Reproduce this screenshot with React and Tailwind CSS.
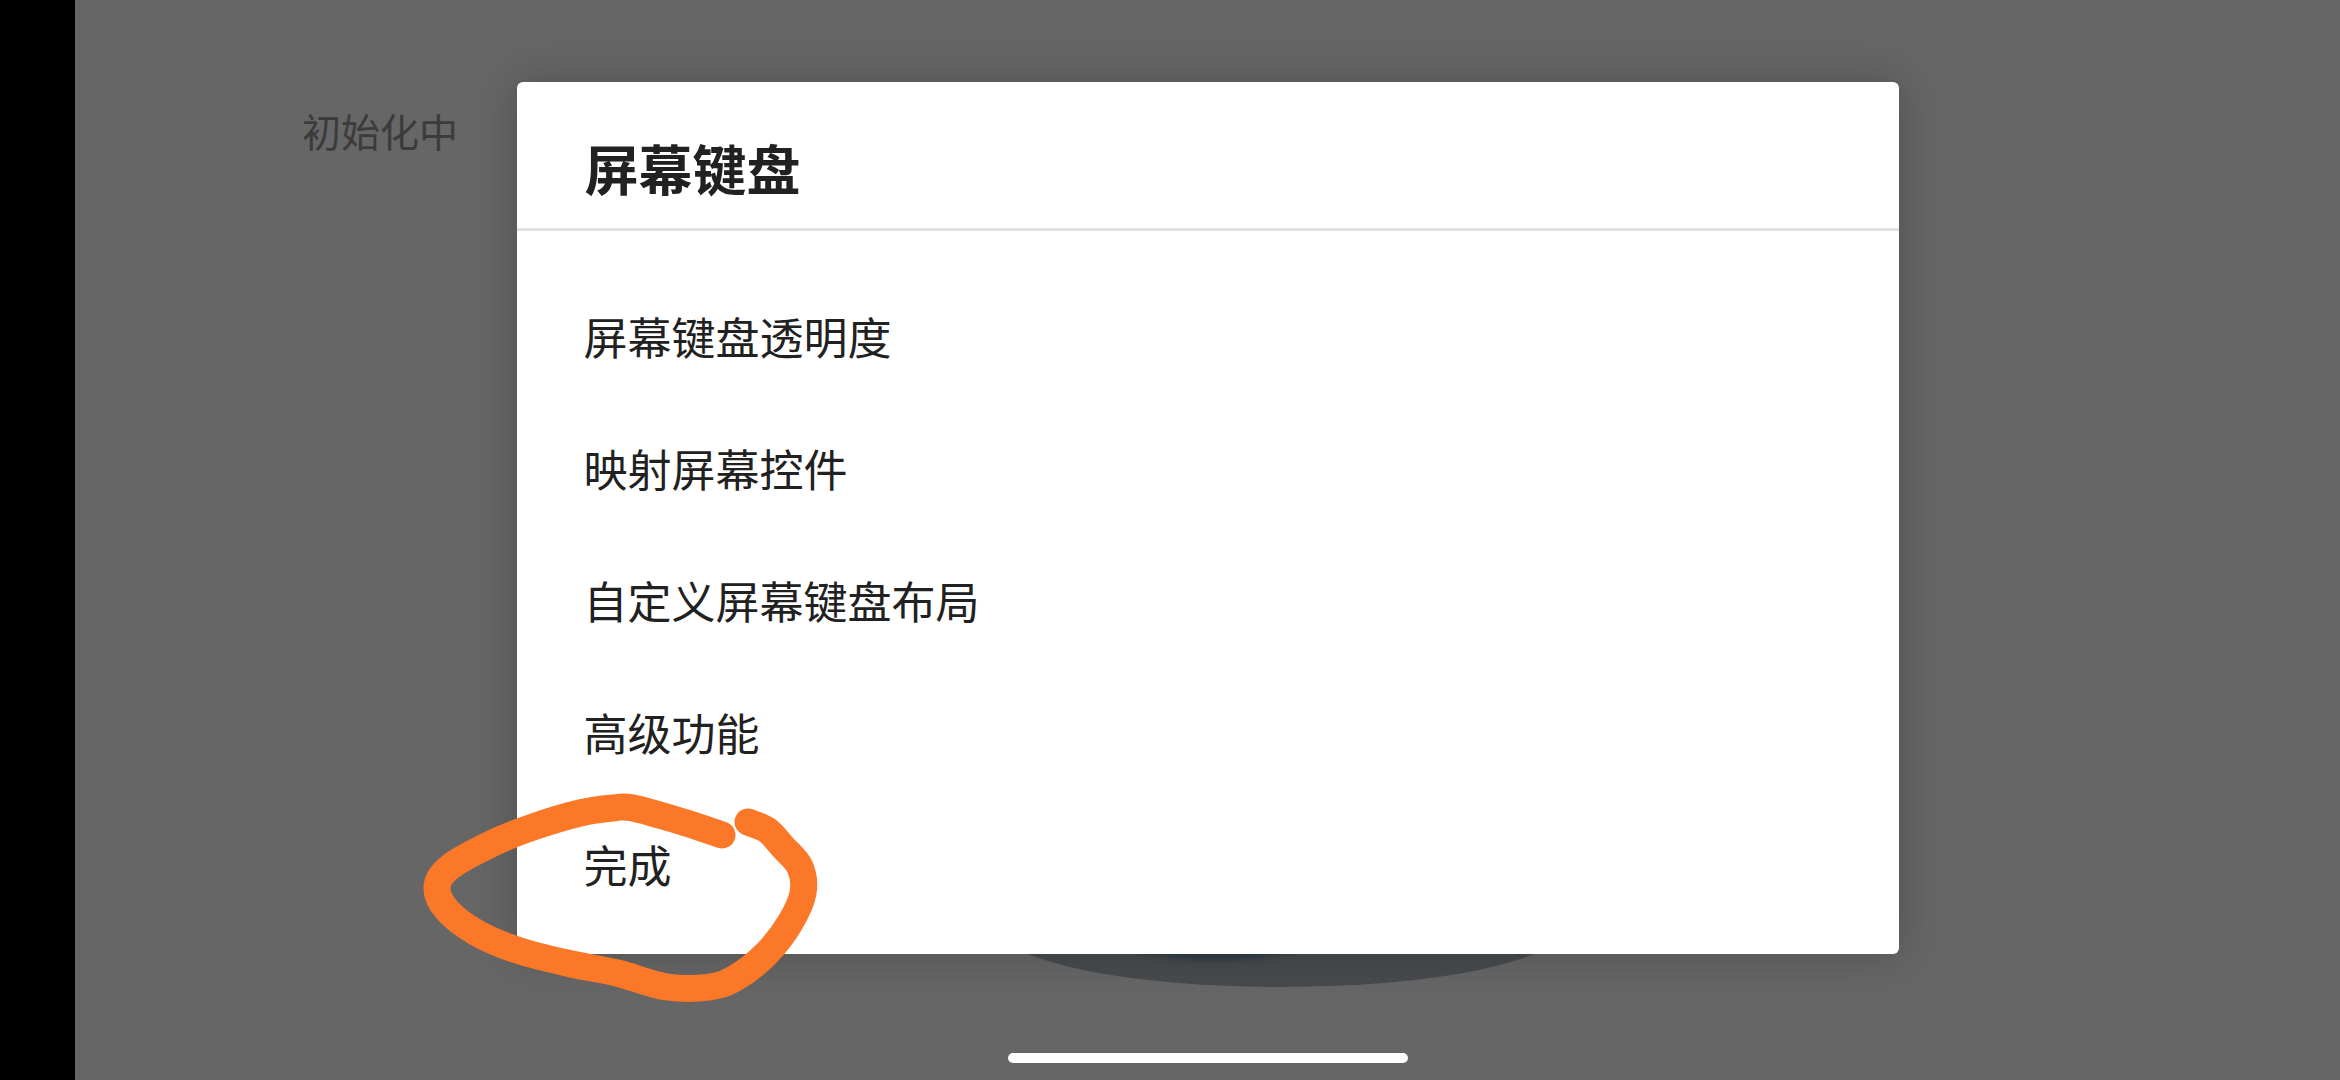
import React from 'react';

const items = ['屏幕键盘透明度', '映射屏幕控件', '自定义屏幕键盘布局', '高级功能', '完成'];

// hand-drawn circle round "完成", in page pixels
const scribble = [
    [722, 835], [683, 822], [633, 808], [613, 808], [580, 813], [533, 827], [493, 843],
    [450, 867], [437, 887], [447, 910], [477, 933], [517, 950], [567, 963], [617, 973],
    [667, 987], [710, 987], [737, 977], [767, 953], [790, 923], [803, 893], [800, 867],
    [783, 847], [767, 830], [748, 822],
];

const smoothPath = (pts) => {
    let d = `M${pts[0][0]} ${pts[0][1]}`;
    for (let i = 0; i < pts.length - 1; i++) {
        const p0 = pts[i - 1] || pts[i];
        const p1 = pts[i];
        const p2 = pts[i + 1];
        const p3 = pts[i + 2] || p2;
        const c1 = [p1[0] + (p2[0] - p0[0]) / 6, p1[1] + (p2[1] - p0[1]) / 6];
        const c2 = [p2[0] - (p3[0] - p1[0]) / 6, p2[1] - (p3[1] - p1[1]) / 6];
        d += ` C${c1[0]} ${c1[1]} ${c2[0]} ${c2[1]} ${p2[0]} ${p2[1]}`;
    }
    return d;
};

const App = () => {
    return (
        <div
            className="relative flex w-[2340px] h-[1080px] overflow-hidden"
            style={{ fontFamily: '"Noto Sans CJK SC", "Noto Sans", sans-serif' }}
        >
            {/* Left black strip */}
            <div className="w-[75px] h-full bg-black shrink-0" />

            {/* Dimmed app area */}
            <div className="relative flex-1 h-full bg-[#666666]">
                <div className="ml-[227px] mt-[111px] text-[39px] leading-none text-[#3b3b3b]">初始化中</div>

                {/* dimmed control peeking out below the dialog */}
                <div className="absolute left-[923px] top-[867px] w-[566px] h-[120px] rounded-[50%] bg-[#484b4e]" />
                <div className="absolute left-[1010px] top-[872px] w-[260px] h-[88px] rounded-[50%] bg-[#2f3a45] blur-[3px]" />

                {/* Dialog */}
                <div className="absolute inset-0 flex justify-center pt-[82px]">
                    <div className="w-[1382px] h-[872px] bg-white rounded-[6px] shadow-[0_0_45px_rgba(0,0,0,0.22)] flex flex-col">
                        <div className="h-[149px] pt-[59px] pl-[68px] border-b-[3px] border-[#e1e1e1] shrink-0">
                            <h1 className="text-[54px] leading-none font-bold text-[#212121]">屏幕键盘</h1>
                        </div>
                        <div className="flex flex-col pt-[39px]">
                            {items.map((label) => (
                                <div key={label} className="h-[132px] flex items-center pl-[67px]">
                                    <span className="text-[44px] leading-none text-[#212121]">{label}</span>
                                </div>
                            ))}
                        </div>
                    </div>
                </div>

                {/* Home indicator */}
                <div className="absolute bottom-[17px] left-0 right-0 flex justify-center">
                    <div className="w-[400px] h-[10px] rounded-full bg-white" />
                </div>
            </div>

            {/* Orange annotation */}
            <svg className="absolute inset-0 pointer-events-none" width="2340" height="1080" viewBox="0 0 2340 1080">
                <path
                    d={smoothPath(scribble)}
                    fill="none"
                    stroke="#fc7829"
                    strokeWidth="27"
                    strokeLinecap="round"
                    strokeLinejoin="round"
                />
            </svg>
        </div>
    );
};

export default App;
